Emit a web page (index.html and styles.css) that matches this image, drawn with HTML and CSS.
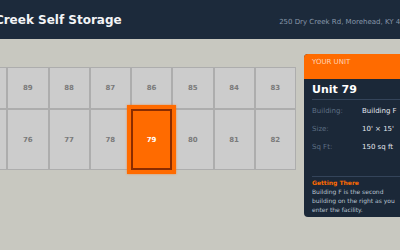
FILE: index.html
```html
<!DOCTYPE html>
<html>
<head>
<meta charset="utf-8">
<link rel="stylesheet" href="styles.css">
</head>
<body>
<div class="page">
  <header class="topbar">
    <h1 class="brand">Dry Creek Self Storage</h1>
    <span class="address">250 Dry Creek Rd, Morehead, KY 40351</span>
  </header>
  <main class="main">
    <section class="units">
      <div class="unit">90</div>
      <div class="unit">89</div>
      <div class="unit">88</div>
      <div class="unit">87</div>
      <div class="unit">86</div>
      <div class="unit">85</div>
      <div class="unit">84</div>
      <div class="unit">83</div>
      <div class="unit tall">75</div>
      <div class="unit tall">76</div>
      <div class="unit tall">77</div>
      <div class="unit tall">78</div>
      <div class="unit tall current">79</div>
      <div class="unit tall">80</div>
      <div class="unit tall">81</div>
      <div class="unit tall">82</div>
    </section>
    <aside class="panel">
      <div class="panel-head">YOUR UNIT</div>
      <div class="panel-title">Unit 79</div>
      <dl class="facts">
        <div class="fact"><dt>Building:</dt><dd>Building F</dd></div>
        <div class="fact"><dt>Size:</dt><dd>10' × 15'</dd></div>
        <div class="fact"><dt>Sq Ft:</dt><dd>150 sq ft</dd></div>
      </dl>
      <div class="directions">
        <h2 class="directions-title">Getting There</h2>
        <p class="directions-text">Building F is the second building on the right as you enter the facility.</p>
      </div>
    </aside>
  </main>
</div>
</body>
</html>
```

FILE: styles.css
```css
html, body {
  margin: 0;
  padding: 0;
}
body {
  width: 400px;
  height: 250px;
  overflow: hidden;
  display: flex;
  justify-content: center;
  background: #c8c8c0;
  font-family: "DejaVu Sans", Verdana, sans-serif;
}
.page {
  flex: 0 0 520px;
  width: 520px;
}
.topbar {
  height: 39px;
  background: #1c2a3b;
  display: flex;
  align-items: baseline;
  justify-content: space-between;
  padding: 0 42px 0 27px;
  box-sizing: border-box;
}
.brand {
  margin: 0;
  font-size: 12px;
  line-height: 40px;
  font-weight: bold;
  color: #f2f4f6;
  white-space: nowrap;
}
.address {
  font-size: 7px;
  color: #8797aa;
  white-space: nowrap;
}
.main {
  display: flex;
  align-items: flex-start;
  gap: 8px;
  padding: 15px 46px 0 26px;
}
.units {
  flex: 1;
  margin-top: 13px;
  display: grid;
  grid-template-columns: repeat(8, 1fr);
  grid-template-rows: 42px 61px;
}
.unit {
  background: #cccccc;
  border: 1px solid #adadad;
  display: flex;
  align-items: center;
  justify-content: center;
  font-size: 7px;
  font-weight: bold;
  color: #7a7a7a;
}
.unit.current {
  position: relative;
  z-index: 1;
  background: #ff6b00;
  border: 2px solid #8a2c00;
  box-shadow: 0 0 0 4px #ff6b00, 0 0 2px 4px rgba(255, 107, 0, 0.6);
  color: #ffffff;
}
.panel {
  flex: 0 0 110px;
  width: 110px;
  background: #1b2838;
  border-radius: 4px;
  overflow: hidden;
}
.panel-head {
  background: #ff6b00;
  color: #ffd3b6;
  font-size: 7px;
  line-height: 10px;
  padding: 3px 8px 12px;
}
.panel-title {
  margin: 0 8px;
  padding: 4px 0 3px;
  font-size: 11px;
  line-height: 13px;
  font-weight: bold;
  color: #ffffff;
  border-bottom: 1px solid #34445a;
}
.facts {
  margin: 2px 8px 0;
  padding: 0 0 20px;
  border-bottom: 1px solid #34445a;
}
.fact {
  display: flex;
  height: 18px;
  align-items: center;
  font-size: 7px;
}
.fact dt {
  width: 50px;
  color: #5e6f84;
}
.fact dd {
  margin: 0;
  color: #e2e7ee;
  white-space: nowrap;
}
.directions {
  padding: 1px 8px 3px;
}
.directions-title {
  margin: 0;
  font-size: 6px;
  line-height: 9px;
  font-weight: bold;
  color: #ff6b00;
}
.directions-text {
  margin: 0;
  font-size: 6px;
  line-height: 9px;
  color: #b9c3cf;
}
```
